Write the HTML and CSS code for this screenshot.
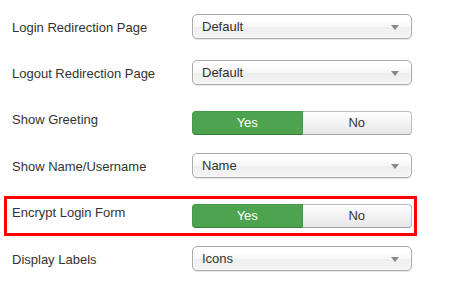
FILE: index.html
```html
<!DOCTYPE html>
<html lang="en">
<head>
  <meta charset="UTF-8">
  <title>Login Module Options</title>
  <link rel="stylesheet" href="styles.css">
</head>
<body>

  <!-- Options form -->
  <div class="options">

    <div class="row">
      <label class="control-label">Login Redirection Page</label>
      <div class="controls">
        <div class="select"><span>Default</span><i class="caret"></i></div>
      </div>
    </div>

    <div class="row">
      <label class="control-label">Logout Redirection Page</label>
      <div class="controls">
        <div class="select"><span>Default</span><i class="caret"></i></div>
      </div>
    </div>

    <div class="row row-switch">
      <label class="control-label">Show Greeting</label>
      <div class="controls">
        <div class="switch">
          <span class="btn btn-yes">Yes</span>
          <span class="btn btn-no">No</span>
        </div>
      </div>
    </div>

    <div class="row">
      <label class="control-label">Show Name/Username</label>
      <div class="controls">
        <div class="select"><span>Name</span><i class="caret"></i></div>
      </div>
    </div>

    <!-- Highlighted option -->
    <div class="row row-switch highlight">
      <label class="control-label">Encrypt Login Form</label>
      <div class="controls">
        <div class="switch">
          <span class="btn btn-yes">Yes</span>
          <span class="btn btn-no">No</span>
        </div>
      </div>
    </div>

    <div class="row">
      <label class="control-label">Display Labels</label>
      <div class="controls">
        <div class="select"><span>Icons</span><i class="caret"></i></div>
      </div>
    </div>

  </div>

</body>
</html>
```

FILE: styles.css
```css
body {
  margin: 0;
  padding: 0;
  background: #fff;
  color: #333;
  font-family: 'Liberation Sans', Arial, sans-serif;
  font-size: 13px;
}

/* Options form */
.options {
  display: flex;
  flex-direction: column;
  width: 400px;
  padding: 14px 0 0 12px;
}

.row {
  display: flex;
  align-items: flex-start;
  margin-bottom: 21px;
}

.control-label {
  width: 180px;
  padding-top: 5px;
  line-height: 18px;
}

.controls {
  width: 220px;
}

/* Radio switches sit a bit lower */
.row-switch {
  margin-bottom: 18px;
}

.row-switch .controls {
  padding-top: 5px;
}

/* Red annotation box */
.highlight {
  border: 3px solid #f00;
  padding: 0 2px 5px 5px;
  margin: -3px -5px 10px -8px;
}

/* Dropdown */
.select {
  position: relative;
  box-sizing: border-box;
  height: 25px;
  padding-left: 9px;
  line-height: 23px;
  border: 1px solid #aaa;
  border-radius: 5px;
  background: linear-gradient(#fff 20%, #f6f6f6 50%, #eee 52%, #f4f4f4 100%);
  box-shadow: 0 0 3px #fff inset, 0 1px 1px rgba(0,0,0,0.1);
  color: #333;
}

.caret {
  position: absolute;
  top: 10px;
  right: 12px;
  width: 0;
  height: 0;
  border-left: 4px solid transparent;
  border-right: 4px solid transparent;
  border-top: 5px solid #888;
}

/* Yes / No switch */
.switch {
  display: flex;
  height: 24px;
}

.btn {
  flex: 1;
  box-sizing: border-box;
  text-align: center;
  line-height: 22px;
  border: 1px solid #bbb;
  border-bottom-color: #a2a2a2;
}

.btn-yes {
  background: #4ea34e;
  border-color: #45984a;
  border-bottom-color: #387a38;
  color: #fff;
  border-radius: 4px 0 0 4px;
}

.btn-no {
  background: linear-gradient(#fff, #e6e6e6);
  border-left: 0;
  color: #333;
  border-radius: 0 4px 4px 0;
}
```
